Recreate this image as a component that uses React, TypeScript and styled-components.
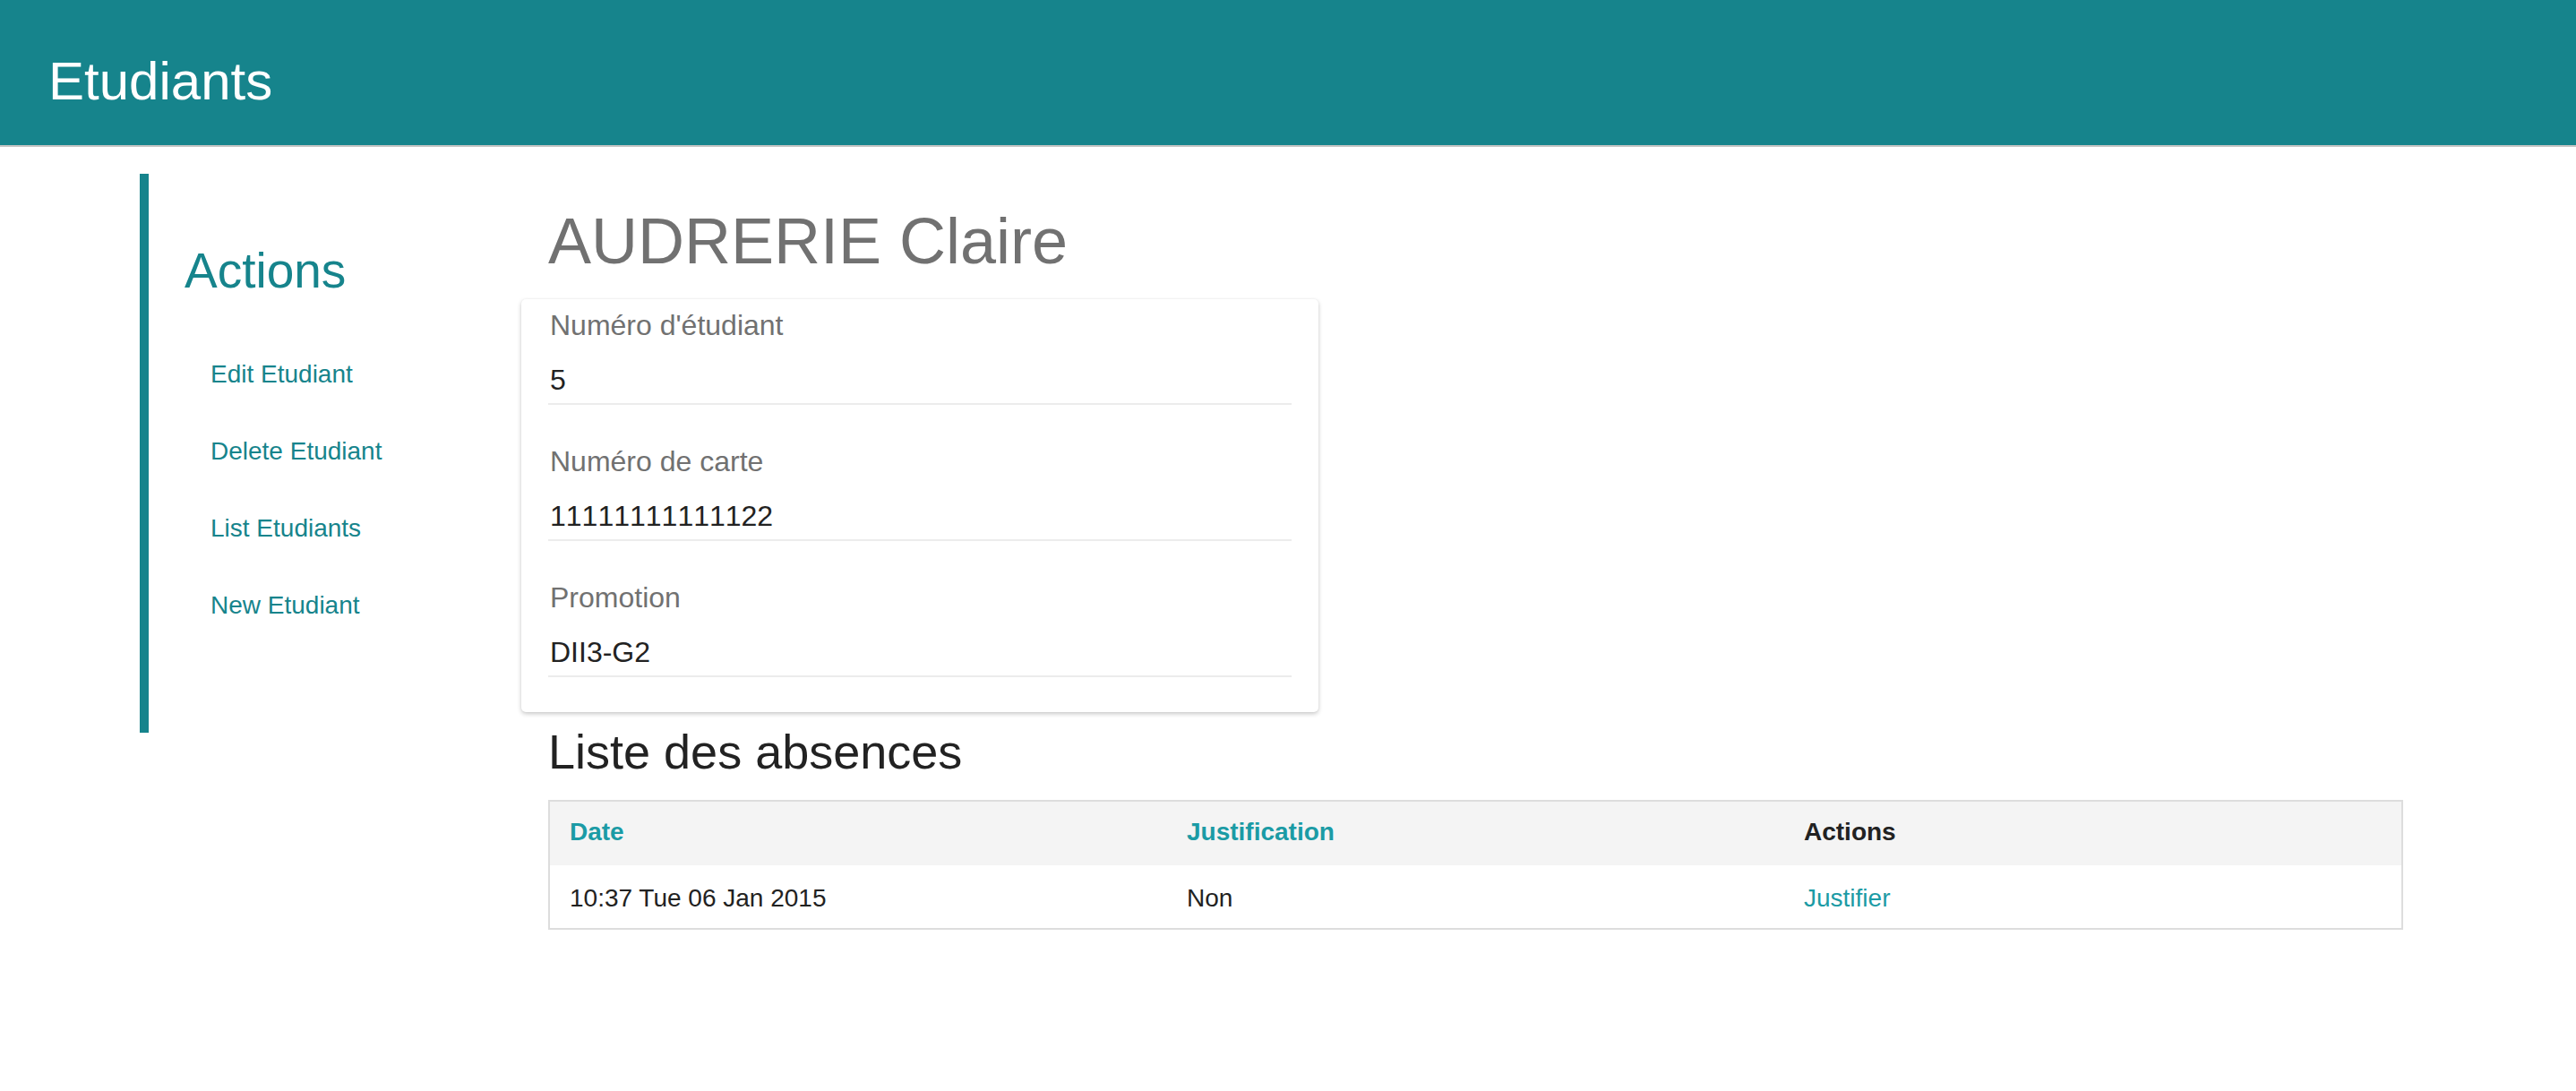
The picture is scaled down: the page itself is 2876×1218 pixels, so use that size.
import React from "react";
import styled, { createGlobalStyle } from "styled-components";

const GlobalStyle = createGlobalStyle`
  html, body {
    margin: 0;
    padding: 0;
    background: #ffffff;
    font-family: "Liberation Sans", Arial, Helvetica, sans-serif;
  }
  * { box-sizing: border-box; }
`;

const TEAL = "#16848c";
const TEAL_LIGHT = "#1b9ba5";

const TopBar = styled.header`
  height: 164px;
  background: ${TEAL};
  border-bottom: 2px solid #c4c4c4;
  padding: 56px 0 0 54px;
`;

const BrandTitle = styled.h1`
  margin: 0;
  font-size: 60px;
  line-height: 70px;
  font-weight: 400;
  color: #ffffff;
`;

const Body = styled.div`
  display: flex;
  padding: 30px 0 0 156px;
`;

const Sidebar = styled.nav`
  width: 456px;
  flex: none;
  align-self: flex-start;
  border-left: 10px solid ${TEAL};
  padding: 76px 0 126px 40px;
  display: flex;
  flex-direction: column;
`;

const SideHeading = styled.h2`
  margin: 0 0 68px 0;
  font-size: 55px;
  line-height: 64px;
  font-weight: 400;
  color: ${TEAL};
`;

const SideLinks = styled.ul`
  list-style: none;
  margin: 0;
  padding: 0 0 0 29px;
  display: flex;
  flex-direction: column;
  gap: 54px;
`;

const SideLink = styled.a`
  display: block;
  font-size: 28px;
  line-height: 32px;
  color: ${TEAL};
  text-decoration: none;
`;

const Main = styled.main`
  width: 2071px;
  flex: none;
  display: flex;
  flex-direction: column;
`;

const PageTitle = styled.h1`
  margin: 35px 0 25px 0;
  font-size: 72px;
  line-height: 80px;
  font-weight: 400;
  color: #717171;
`;

const Card = styled.dl`
  margin: 0 0 0 -30px;
  width: 890px;
  padding: 9px 30px 39px 30px;
  background: #ffffff;
  border-radius: 5px;
  box-shadow: 0 2px 5px rgba(0, 0, 0, 0.22), 0 0 2px rgba(0, 0, 0, 0.06);
  display: flex;
  flex-direction: column;
  gap: 43px;
`;

const Field = styled.div`
  display: flex;
  flex-direction: column;
`;

const FieldLabel = styled.dt`
  margin: 0;
  padding-left: 2px;
  font-size: 32px;
  line-height: 40px;
  color: #717171;
`;

const FieldValue = styled.dd`
  margin: 21px 0 0 0;
  padding: 0 0 6px 2px;
  font-size: 32px;
  line-height: 40px;
  color: #222222;
  font-kerning: none;
  border-bottom: 2px solid #ececec;
`;

const SectionTitle = styled.h2`
  margin: 14px 0 24px 0;
  font-size: 54px;
  line-height: 60px;
  font-weight: 400;
  color: #222222;
`;

const Table = styled.table`
  width: 2071px;
  border-collapse: separate;
  border-spacing: 0;
  table-layout: fixed;
  border: 2px solid #dddddd;
`;

const HeadRow = styled.tr`
  background: #f4f4f4;
`;

const HeadCell = styled.th<{ $link?: boolean }>`
  height: 71px;
  padding: 18px 22px 21px 22px;
  text-align: left;
  font-size: 28px;
  line-height: 32px;
  font-weight: 700;
  color: ${(p) => (p.$link ? TEAL_LIGHT : "#222222")};
`;

const Cell = styled.td<{ $link?: boolean }>`
  height: 70px;
  padding: 21px 22px 17px 22px;
  font-size: 28px;
  line-height: 32px;
  color: ${(p) => (p.$link ? TEAL_LIGHT : "#222222")};
`;

const fields = [
  { label: "Numéro d'étudiant", value: "5" },
  { label: "Numéro de carte", value: "11111111111122" },
  { label: "Promotion", value: "DII3-G2" },
];

const links = ["Edit Etudiant", "Delete Etudiant", "List Etudiants", "New Etudiant"];

export default function App() {
  return (
    <>
      <GlobalStyle />
      <TopBar>
        <BrandTitle>Etudiants</BrandTitle>
      </TopBar>
      <Body>
        <Sidebar>
          <SideHeading>Actions</SideHeading>
          <SideLinks>
            {links.map((l) => (
              <li key={l}>
                <SideLink href="#">{l}</SideLink>
              </li>
            ))}
          </SideLinks>
        </Sidebar>
        <Main>
          <PageTitle>AUDRERIE Claire</PageTitle>
          <Card>
            {fields.map((f) => (
              <Field key={f.label}>
                <FieldLabel>{f.label}</FieldLabel>
                <FieldValue>{f.value}</FieldValue>
              </Field>
            ))}
          </Card>
          <SectionTitle>Liste des absences</SectionTitle>
          <Table>
            <thead>
              <HeadRow>
                <HeadCell $link>Date</HeadCell>
                <HeadCell $link>Justification</HeadCell>
                <HeadCell>Actions</HeadCell>
              </HeadRow>
            </thead>
            <tbody>
              <tr>
                <Cell>10:37 Tue 06 Jan 2015</Cell>
                <Cell>Non</Cell>
                <Cell $link>Justifier</Cell>
              </tr>
            </tbody>
          </Table>
        </Main>
      </Body>
    </>
  );
}
